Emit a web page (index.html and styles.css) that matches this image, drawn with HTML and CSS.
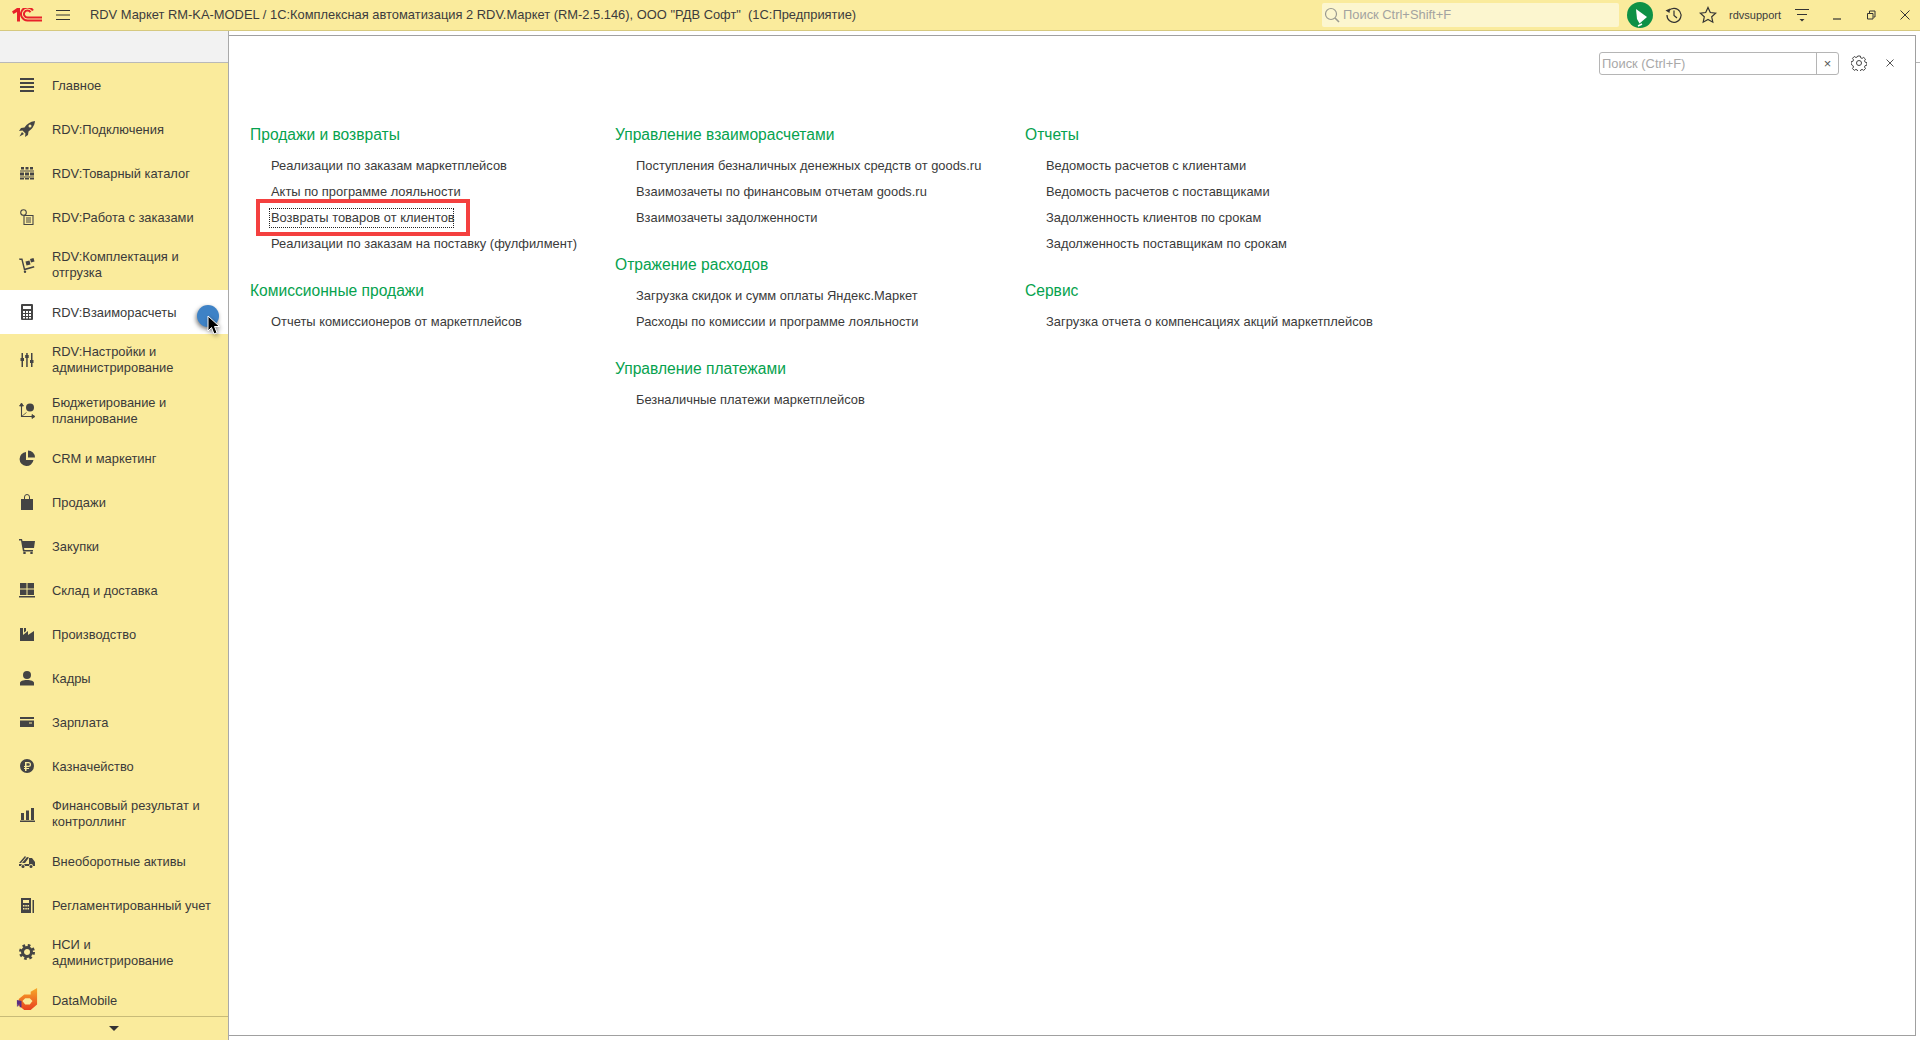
FILE: index.html
```html
<!DOCTYPE html>
<html lang="ru">
<head>
<meta charset="utf-8">
<title>RDV Маркет</title>
<link rel="stylesheet" href="styles.css">
</head>
<body>
<header class="topbar">
  <svg class="logo" width="30" height="14" viewBox="0 0 30 14"><path d="M0 3.500 L5 0 H8 V13.500 H5 V4 L1.500 6z" fill="#e8222a"/><path d="M21 2.500A6.500 6.500 0 1 0 15.500 12.500H30M18.500 4.200A3.500 3.500 0 1 0 15.500 9.500H30" fill="none" stroke="#e8222a" stroke-width="2"/></svg>
  <svg class="burger" width="14" height="12" viewBox="0 0 14 12"><path d="M0 1.500H14M0 6H14M0 10.500H14" stroke="#333" stroke-width="1"/></svg>
  <div class="app-title">RDV Маркет RM-KA-MODEL / 1С:Комплексная автоматизация 2 RDV.Маркет (RM-2.5.146), ООО "РДВ Софт"&nbsp; (1С:Предприятие)</div>
  <div class="global-search">
    <svg width="16" height="16" viewBox="0 0 16 16"><circle cx="7" cy="7" r="5.500" fill="none" stroke="#9a9a90" stroke-width="1.200"/><path d="M11 11l4 4" stroke="#9a9a90" stroke-width="1.600"/></svg>
    <span>Поиск Ctrl+Shift+F</span>
  </div>
  <svg class="run" width="26" height="26" viewBox="0 0 26 26"><circle cx="13" cy="13" r="13" fill="#0e9146"/><path d="M9 7l11 8-7.500 6.500L10 17z" fill="#fff"/><path d="M11 24l4-2" stroke="#fff" stroke-width="1.500"/></svg>
  <svg class="tool hist" width="18" height="18" viewBox="0 0 18 18"><path d="M3.500 5A7 7 0 1 1 2 9" fill="none" stroke="#333" stroke-width="1.200"/><path d="M.5 4.500L4.500 7 5 2.500z" fill="#333"/><path d="M9 4.500V9.500L12 12" fill="none" stroke="#333" stroke-width="1.200"/></svg>
  <svg class="tool star" width="18" height="18" viewBox="0 0 18 18"><path d="M9 1.500l2.300 5 5.400.6-4 3.700 1.100 5.400L9 13.500l-4.800 2.700 1.100-5.400-4-3.700 5.400-.6z" fill="none" stroke="#333" stroke-width="1.200"/></svg>
  <span class="user">rdvsupport</span>
  <svg class="tool funnel" width="14" height="16" viewBox="0 0 14 16"><path d="M0 2.500H14M2 7.500H12" stroke="#333" stroke-width="1"/><path d="M4.500 12h5L7 14.500z" fill="#333"/></svg>
  <div class="winbtns">
    <svg width="10" height="10" viewBox="0 0 10 10"><path d="M1 9H9" stroke="#333" stroke-width="1.200"/></svg>
    <svg width="10" height="10" viewBox="0 0 10 10"><path d="M1.500 3.500H7V9H1.500zM3.500 3V1H9V7H7.500" fill="none" stroke="#333" stroke-width="1"/></svg>
    <svg width="10" height="10" viewBox="0 0 10 10"><path d="M.5.5l9 9M9.500.5l-9 9" stroke="#333" stroke-width="1"/></svg>
  </div>
</header>
<div class="main">
  <aside class="side">
    <div class="side-gap"></div>
    <nav class="menu">
      <a class="item"><svg class="ic" viewBox="0 0 16 16"><path d="M1 1h14v2H1zM1 5h14v2H1zM1 9h14v2H1zM1 13h14v2H1z"/></svg><span>Главное</span></a>
      <a class="item"><svg class="ic" viewBox="0 0 16 16"><path fill-rule="evenodd" d="M16 0C11 .5 8 3 5.500 6.500L2 7 0 10l3.500-.5 3 3L6 16l3-2 .5-3.500C13 8 15.500 5 16 0zM11 3.500a1.500 1.500 0 1 1 0 3 1.500 1.500 0 0 1 0-3z"/><path d="M3 11l-2.500 4.500L5 13z"/></svg><span>RDV:Подключения</span></a>
      <a class="item"><svg class="ic" viewBox="0 0 16 16"><path d="M2 2h3v2.500H2zM6.500 2h3v2.500h-3zM11 2h3v2.500h-3zM1 5.500h14v1H1zM1 7.500h4v3H1zM6 7.500h4v3H6zM11 7.500h4v3h-4zM1 11.500h14v1H1zM1 13h4v1.500H1zM6 13h4v1.500H6zM11 13h4v1.500h-4z"/></svg><span>RDV:Товарный каталог</span></a>
      <a class="item"><svg class="ic" viewBox="0 0 16 16"><circle cx="4.500" cy="3.500" r="2.800" fill="none" stroke="#444" stroke-width="1.100"/><path d="M5 6.500H14V15.500H5zM7 9h5M7 11h5M7 13h5" fill="none" stroke="#444" stroke-width="1.100"/></svg><span>RDV:Работа с заказами</span></a>
      <a class="item"><svg class="ic" viewBox="0 0 16 16"><path d="M0 1.500h3.500l2.500 10 9-2.500.4 1.400-10.400 3-2.600-10.500H.5zM6.500 4.500l4-1 1 4-4 1zM11 2l3.500-1 1 3.500-3.500 1z"/><circle cx="6" cy="14.800" r="1.200"/></svg><span>RDV:Комплектация и<br>отгрузка</span></a>
      <a class="item active"><svg class="ic" viewBox="0 0 16 16"><path d="M3 0h10a1 1 0 0 1 1 1v14a1 1 0 0 1-1 1H3a1 1 0 0 1-1-1V1a1 1 0 0 1 1-1zM4 2v3h8V2zM4 7v2h2V7zM7 7v2h2V7zM10 7v2h2V7zM4 10v2h2v-2zM7 10v2h2v-2zM10 10v2h2v-2zM4 13v1.500h2V13zM7 13v1.500h2V13zM10 13v1.500h2V13z" fill-rule="evenodd"/></svg><span>RDV:Взаиморасчеты</span>
        <i class="dot"></i>
        <svg class="cursor" width="14" height="22" viewBox="0 0 14 22"><path d="M1 1V16L4.500 12.500 7 19l3-1.300L7.500 11.500H12.500z" fill="#000" stroke="#fff" stroke-width="1"/></svg>
      </a>
      <a class="item"><svg class="ic" viewBox="0 0 16 16"><path d="M2.500 1h1.500v5h1v3H4v6H2.500V9h-1V6h1zM7.200 1h1.500v2h1v3h-1v9H7.200V6h-1V3h1zM12 1h1.500v7h1v3h-1v4H12v-4h-1V8h1z"/></svg><span>RDV:Настройки и<br>администрирование</span></a>
      <a class="item"><svg class="ic" viewBox="0 0 16 16"><path d="M2.500 2v11.500H15" fill="none" stroke="#444" stroke-width="1.100"/><path d="M2.500 0l2 3h-4zM16 13.500l-3-2v4zM2.500 13.500l5-4" stroke="#444" stroke-width=".8"/><circle cx="11" cy="4.500" r="4"/></svg><span>Бюджетирование и<br>планирование</span></a>
      <a class="item"><svg class="ic" viewBox="0 0 16 16"><path d="M7 2A7 7 0 1 0 14.500 10H7zM9 .5V7.500h7A7 7 0 0 0 9 .5z"/></svg><span>CRM и маркетинг</span></a>
      <a class="item"><svg class="ic" viewBox="0 0 16 16"><path d="M2 5h12v11H2z"/><path d="M5.500 7V3a2.500 2.500 0 0 1 5 0v4" fill="none" stroke="#444" stroke-width="1"/></svg><span>Продажи</span></a>
      <a class="item"><svg class="ic" viewBox="0 0 16 16"><path d="M0 1h3l.5 2H16l-1 7H5l.4 2H14v1.500H4L2 2.500H0z"/><circle cx="5.500" cy="15" r="1.300"/><circle cx="12.500" cy="15" r="1.300"/></svg><span>Закупки</span></a>
      <a class="item"><svg class="ic" viewBox="0 0 16 16"><path d="M1 1h6.500v5.500H1zM8.500 1H15v5.500H8.500zM1 7.500h6.500V13H1zM8.500 7.500H15V13H8.500zM0 14h16v1.500H0z"/></svg><span>Склад и доставка</span></a>
      <a class="item"><svg class="ic" viewBox="0 0 16 16"><path d="M1 15V2h3v7l5-4v4l6-4v10zM5 2h2v3l-2 1.500z"/></svg><span>Производство</span></a>
      <a class="item"><svg class="ic" viewBox="0 0 16 16"><circle cx="8" cy="5" r="4"/><path d="M1 15.500V13c0-2 3-3 7-3s7 1 7 3v2.500z"/></svg><span>Кадры</span></a>
      <a class="item"><svg class="ic" viewBox="0 0 16 16"><path d="M1 3h14v2H1zM1 6.500h14v6.500H1zM10 8.500v1h3v-1z" fill-rule="evenodd"/></svg><span>Зарплата</span></a>
      <a class="item"><svg class="ic" viewBox="0 0 16 16"><path d="M8 1a7 7 0 1 1 0 14A7 7 0 0 1 8 1zM6 4v4H5v1h1v1H5v1h1v2h1.500v-2H10v-1H7.500V9H9.500a2.500 2.500 0 0 0 0-5zM7.500 5.200h2a1.300 1.300 0 0 1 0 2.600h-2z" fill-rule="evenodd"/></svg><span>Казначейство</span></a>
      <a class="item"><svg class="ic" viewBox="0 0 16 16"><path d="M2 7h3v7H2zM7 4.500h3V14H7zM12 2h3v12h-3zM1 14.500h15V16H1z"/></svg><span>Финансовый результат и<br>контроллинг</span></a>
      <a class="item"><svg class="ic" viewBox="0 0 16 16"><path d="M0 10l6-7 1 1-5 6zM3 10l5-6 2 .5L6 10zM10 5h3l3 4v4h-2a2 2 0 0 0-4 0H6a2 2 0 0 0-4 0H0v-2h10z"/><circle cx="4" cy="13.500" r="1.500"/><circle cx="12" cy="13.500" r="1.500"/></svg><span>Внеоборотные активы</span></a>
      <a class="item"><svg class="ic" viewBox="0 0 16 16"><path d="M2 1h10v15H2zM4 3v3h6V3zM4 8v1.500h1.500V8zM6.300 8v1.500h1.500V8zM8.500 8v1.500H10V8zM4 11v1.500h1.500V11zM6.300 11v1.500h1.500V11zM8.500 11v1.500H10V11z" fill-rule="evenodd"/><path d="M13.500 3H15v13h-1.500z"/></svg><span>Регламентированный учет</span></a>
      <a class="item"><svg class="ic gear-ic" viewBox="0 0 16 16"><circle class="ring" cx="8" cy="8" r="4.500"/><circle class="teeth" cx="8" cy="8" r="6.500"/></svg><span>НСИ и<br>администрирование</span></a>
      <a class="item"><svg class="ic dm" viewBox="0 0 24 26"><defs><linearGradient id="dmg" x1="0" y1="0" x2="0" y2="1"><stop offset="0" stop-color="#f7a928"/><stop offset="1" stop-color="#e8401f"/></linearGradient></defs><path fill-rule="evenodd" d="M23 0V18l-7 6H9L3 19V12l6-5h7V4zM10 11l-3 3 3 4h5l3-4-3-3z" fill="url(#dmg)"/><path d="M1 13l5 1v7H4v-4l-1 3-1-3v3H1z" fill="#5a2d82"/></svg><span>DataMobile</span></a>
    </nav>
    <div class="side-more"><i class="more-arrow"></i></div>
  </aside>
  <section class="panel">
    <div class="panel-tools">
      <div class="find"><span class="find-input">Поиск (Ctrl+F)</span><span class="find-x">×</span></div>
      <svg class="gear" width="16" height="16" viewBox="0 0 16 16"><path d="M6.700 1h2.600l.4 1.800 1.400.6 1.600-1 1.800 1.800-1 1.600.6 1.400 1.800.4v2.600l-1.800.4-.6 1.400 1 1.600-1.800 1.800-1.600-1-1.400.6-.4 1.800H6.700l-.4-1.800-1.400-.6-1.600 1-1.800-1.800 1-1.600-.6-1.400L.1 9.300V6.700l1.800-.4.600-1.400-1-1.600 1.800-1.800 1.600 1 1.400-.6z" fill="none" stroke="#444" stroke-width="1"/><circle cx="8" cy="8" r="2.500" fill="none" stroke="#444" stroke-width="1"/></svg>
      <svg class="panel-x" width="8" height="8" viewBox="0 0 8 8"><path d="M.5.5l7 7M7.500.5l-7 7" stroke="#555" stroke-width="1"/></svg>
    </div>
    <div class="cols">
      <div class="col col1">
        <h2>Продажи и возвраты</h2>
        <a>Реализации по заказам маркетплейсов</a>
        <a>Акты по программе лояльности</a>
        <a class="focus">Возвраты товаров от клиентов</a>
        <a>Реализации по заказам на поставку (фулфилмент)</a>
        <h2>Комиссионные продажи</h2>
        <a>Отчеты комиссионеров от маркетплейсов</a>
      </div>
      <div class="col col2">
        <h2>Управление взаиморасчетами</h2>
        <a>Поступления безналичных денежных средств от goods.ru</a>
        <a>Взаимозачеты по финансовым отчетам goods.ru</a>
        <a>Взаимозачеты задолженности</a>
        <h2>Отражение расходов</h2>
        <a>Загрузка скидок и сумм оплаты Яндекс.Маркет</a>
        <a>Расходы по комиссии и программе лояльности</a>
        <h2>Управление платежами</h2>
        <a>Безналичные платежи маркетплейсов</a>
      </div>
      <div class="col col3">
        <h2>Отчеты</h2>
        <a>Ведомость расчетов с клиентами</a>
        <a>Ведомость расчетов с поставщиками</a>
        <a>Задолженность клиентов по срокам</a>
        <a>Задолженность поставщикам по срокам</a>
        <h2>Сервис</h2>
        <a>Загрузка отчета о компенсациях акций маркетплейсов</a>
      </div>
    </div>
  </section>
</div>
</body>
</html>
```
FILE: styles.css
```css
*, *::before, *::after { box-sizing: border-box; }
html, body { margin: 0; height: 100%; overflow: hidden; }
body { width: 1920px; height: 1040px; background: #fff; font: 12.9px/16px "Liberation Sans", Arial, sans-serif; color: #3a3a3a; display: flex; flex-direction: column; }
.topbar { height: 31px; flex: none; background: #faeb9c; border-bottom: 1px solid #d6c97f; display: flex; align-items: center; position: relative; }
.logo { margin-left: 12px; flex: none; }
.burger { margin-left: 14px; flex: none; }
.app-title { margin-left: 20px; width: 1232px; white-space: nowrap; color: #3c3c3c; }
.global-search { width: 297px; height: 24px; background: #fcf6cf; border-radius: 2px; display: flex; align-items: center; padding-left: 2px; gap: 3px; color: #a3a3a0; }
.run { margin-left: 8px; flex: none; }
.tool { flex: none; }
.hist { margin-left: 12px; }
.star { margin-left: 16px; }
.user { margin-left: 12px; font-size: 11px; color: #3c3c3c; }
.funnel { margin-left: 14px; }
.winbtns { margin-left: 23px; display: flex; gap: 24px; align-items: center; }
.main { flex: 1; display: flex; min-height: 0; }
.side { width: 229px; flex: none; display: flex; flex-direction: column; border-right: 1px solid #a9a9a9; background: #faeb9c; }
.side-gap { height: 32px; flex: none; background: #f2f2f2; border-bottom: 1px solid #b9b9b9; }
.menu { flex: 1; min-height: 0; overflow: hidden; }
.item { display: flex; align-items: center; height: 44px; padding: 0 0 0 19px; position: relative; color: #3a3a3a; white-space: nowrap; }
.item span { padding-top: 1px; }
.item:has(br) { height: 51px; }
.item.active { background: #fff; }
.ic { width: 16px; height: 16px; margin-right: 17px; flex: none; fill: #444; }
.gear-ic { margin-top: -2px; }
.ring { fill: none; stroke: #444; stroke-width: 3; }
.teeth { fill: none; stroke: #444; stroke-width: 3; stroke-dasharray: 2.55 2.55; }
.ic.dm { width: 22px; height: 24px; margin-left: -3px; margin-right: 14px; }
.dot { position: absolute; left: 197px; top: 15px; width: 22px; height: 22px; border-radius: 50%; background: #3e82c6; box-shadow: -1px 2px 4px rgba(0,0,0,.5); }
.cursor { position: absolute; left: 207px; top: 25px; filter: drop-shadow(1px 2px 2px rgba(0,0,0,.4)); }
.side-more { height: 24px; flex: none; border-top: 1px solid #c8bb78; display: flex; align-items: center; justify-content: center; }
.more-arrow { width: 0; height: 0; border: 5px solid transparent; border-top: 5px solid #333; border-bottom: 0; }
.panel { flex: 1; margin: 4px 4px 4px 0; border: 1px solid #a0a0a0; border-left: 0; position: relative; background: #fff; padding: 0 0 0 21px; }
.panel::after { content: ""; position: absolute; right: -5px; top: 26px; width: 4px; height: 1px; background: #b5b5b5; }
.panel-tools { height: 54px; display: flex; align-items: center; justify-content: flex-end; padding: 0 21px 0 0; }
.find { display: flex; width: 240px; height: 23px; border: 1px solid #b5b5b5; border-radius: 3px; margin-top: 1px; }
.find-input { flex: 1; padding-left: 2px; color: #a8a8a8; line-height: 21px; border-right: 1px solid #b5b5b5; }
.find-x { width: 21px; text-align: center; line-height: 21px; color: #555; }
.gear { margin-left: 12px; }
.panel-x { margin-left: 19px; }
.cols { display: flex; margin-top: 35px; }
.col1 { width: 365px; }
.col2 { width: 410px; }
.col h2 { font-size: 15.6px; line-height: 20px; margin: 0 0 8px; font-weight: 400; color: #06a24e; }
.col a { display: block; margin-left: 21px; height: 26px; line-height: 26px; white-space: nowrap; color: #3a3a3a; }
.col a + h2 { margin-top: 24px; }
.focus { position: relative; }
.focus::before { content: ""; position: absolute; left: -2px; top: 3px; width: 185px; height: 20px; border: 1px dotted #222; }
.focus::after { content: ""; position: absolute; left: -15px; top: -6px; width: 214px; height: 37px; border: 4px solid #f4403f; }
```
